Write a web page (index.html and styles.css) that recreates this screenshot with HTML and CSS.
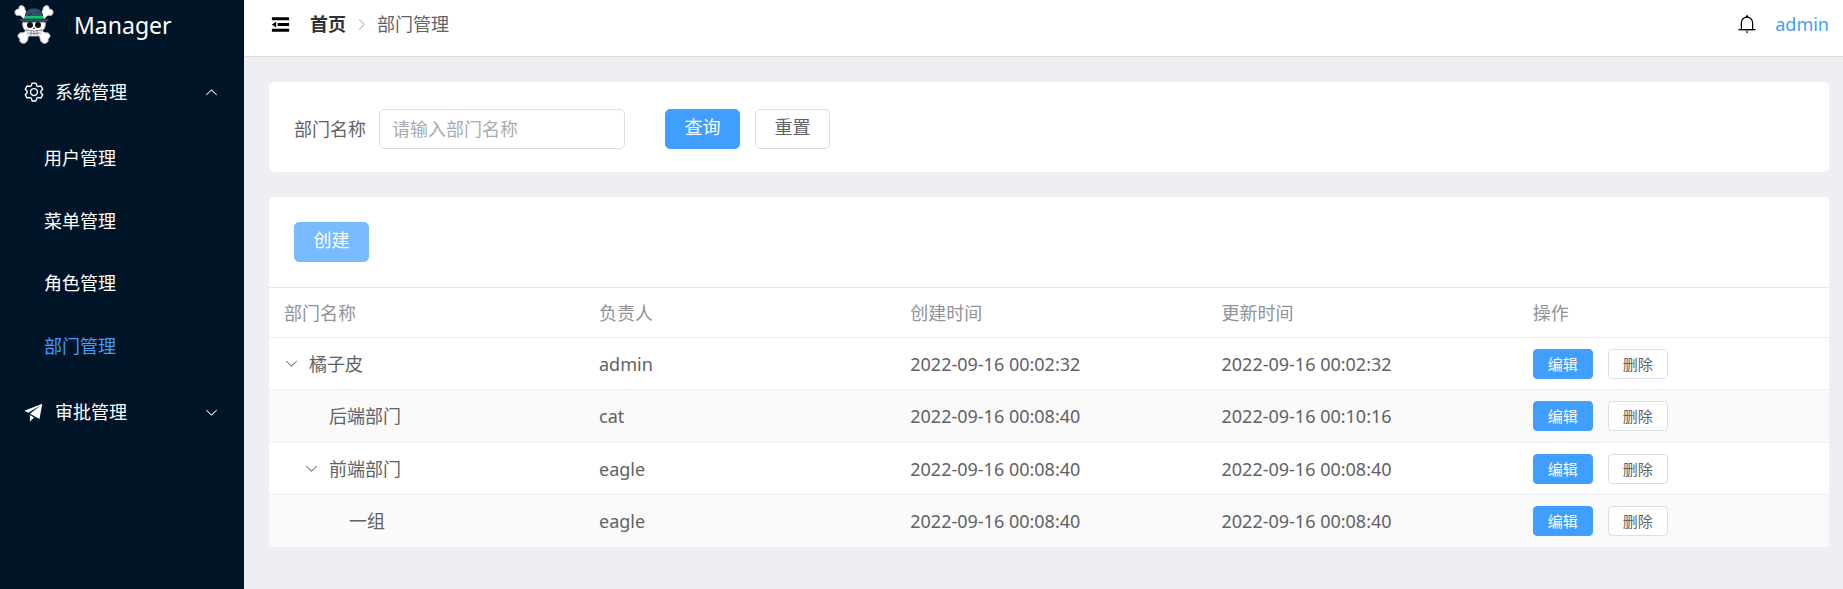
FILE: index.html
```html
<!DOCTYPE html>
<html lang="zh-CN">
<head>
<meta charset="utf-8">
<title>Manager</title>
<link rel="stylesheet" href="styles.css">
</head>
<body>
<svg class="sprite" aria-hidden="true">
  <symbol id="arrow-down" viewBox="0 0 1024 1024"><path d="M831.872 340.864 512 652.672 192.128 340.864a30.592 30.592 0 0 0-42.752 0 29.12 29.12 0 0 0 0 41.6L489.664 714.24a32 32 0 0 0 44.672 0l340.288-331.712a29.12 29.12 0 0 0 0-41.728 30.592 30.592 0 0 0-42.752 0z"/></symbol>
  <symbol id="arrow-right" viewBox="0 0 1024 1024"><path d="M340.864 149.312a30.592 30.592 0 0 0 0 42.752L652.736 512 340.864 831.872a30.592 30.592 0 0 0 0 42.752 29.12 29.12 0 0 0 41.728 0L714.24 534.336a32 32 0 0 0 0-44.672L382.592 149.376a29.12 29.12 0 0 0-41.728 0z"/></symbol>
</svg>
<div class="layout">
  <aside class="sidebar">
    <div class="brand">
      <svg class="brand-logo" viewBox="0 0 40 40" aria-hidden="true">
        <g stroke="#c9c6c8" stroke-width="1" fill="#fff">
          <path d="M6 1c3-1 5 1 5 4l4 5-4 5-5-5C3 11 1 10 1 7c0-2 2-3 4-3 0-1 0-3 1-3z"/>
          <path d="M34 1c-3-1-5 1-5 4l-4 5 4 5 5-5c3 1 5 0 5-3 0-2-2-3-4-3 0-1 0-3-1-3z"/>
          <path d="M13 25l-4 3c-3-1-5 1-5 3s2 2 2 3c-1 3 2 5 5 4 2-1 3-3 3-6l4-3z"/>
          <path d="M27 25l4 3c3-1 5 1 5 3s-2 2-2 3c1 3-2 5-5 4-2-1-3-3-3-6l-4-3z"/>
          <path d="M9 16h22c1 6-1 9-4 10v3q0 2-7 2t-7-2v-3c-3-1-5-4-4-10z"/>
        </g>
        <path d="M11 14c0-7 3-11 9-11s9 4 9 11z" fill="#315267" stroke="#101b28" stroke-width=".8"/>
        <path d="M16 8l2 1M23 7l2 1M14 10l2 0" stroke="#18293a"/>
        <path d="M11 11h18v3H11z" fill="#16c46b"/>
        <path d="M5 14h30v1l-3 2H8l-3-2z" fill="#315267" stroke="#101b28" stroke-width=".6"/>
        <circle cx="16" cy="20" r="3" fill="#111"/>
        <circle cx="24" cy="20" r="3" fill="#111"/>
        <path d="M19 24l1-2 1 2z" fill="#111"/>
        <path d="M12 25q8 2 16 0M14 28q6 1 12 0M17 26v4M20 26v4M23 26v4" fill="none" stroke="#55555c" stroke-width=".7"/>
      </svg>
      <span class="brand-name">Manager</span>
    </div>
    <nav class="menu">
      <button class="menu-title" type="button" aria-expanded="true">
        <svg class="menu-icon" viewBox="0 0 1024 1024" aria-hidden="true"><path d="M600.704 64a32 32 0 0 1 30.464 22.208l35.2 109.376c14.784 7.232 28.928 15.36 42.432 24.512l112.384-24.192a32 32 0 0 1 34.432 15.36L944.32 364.8a32 32 0 0 1-4.032 37.504l-77.12 85.12a357.12 357.12 0 0 1 0 49.024l77.12 85.248a32 32 0 0 1 4.032 37.504l-88.704 153.6a32 32 0 0 1-34.432 15.296L708.8 803.904c-13.44 9.088-27.648 17.28-42.368 24.512l-35.264 109.376A32 32 0 0 1 600.704 960H423.296a32 32 0 0 1-30.464-22.208L357.696 828.48a351.616 351.616 0 0 1-42.56-24.64l-112.32 24.256a32 32 0 0 1-34.432-15.36L79.68 659.2a32 32 0 0 1 4.032-37.504l77.12-85.248a357.12 357.12 0 0 1 0-48.896l-77.12-85.248A32 32 0 0 1 79.68 364.8l88.704-153.6a32 32 0 0 1 34.432-15.296l112.32 24.256c13.568-9.152 27.776-17.408 42.56-24.64l35.2-109.312A32 32 0 0 1 423.232 64H600.64zm-23.424 64H446.72l-36.352 113.088-24.512 11.968a294.113 294.113 0 0 0-34.816 20.096l-22.656 15.36-116.224-25.088-65.28 113.152 79.68 88.192-1.92 27.136a293.12 293.12 0 0 0 0 40.192l1.92 27.136-79.808 88.192 65.344 113.152 116.224-25.024 22.656 15.296a294.113 294.113 0 0 0 34.816 20.096l24.512 11.968L446.72 896h130.688l36.48-113.152 24.448-11.904a288.282 288.282 0 0 0 34.752-20.096l22.592-15.296 116.288 25.024 65.28-113.152-79.744-88.192 1.92-27.136a293.12 293.12 0 0 0 0-40.256l-1.92-27.136 79.808-88.128-65.344-113.152-116.288 24.96-22.592-15.232a287.616 287.616 0 0 0-34.752-20.096l-24.448-11.904L577.344 128zM512 320a192 192 0 1 1 0 384 192 192 0 0 1 0-384zm0 64a128 128 0 1 0 0 256 128 128 0 0 0 0-256z"/></svg>
        <span class="menu-label">系统管理</span>
        <svg class="menu-arrow open" aria-hidden="true"><use href="#arrow-down"/></svg>
      </button>
      <div class="submenu">
        <a class="menu-item" href="#user">用户管理</a>
        <a class="menu-item" href="#menu">菜单管理</a>
        <a class="menu-item" href="#role">角色管理</a>
        <a class="menu-item active" href="#dept" aria-current="page">部门管理</a>
      </div>
      <button class="menu-title" type="button" aria-expanded="false">
        <svg class="menu-icon" viewBox="0 0 1024 1024" aria-hidden="true"><path d="m64 448 832-320-128 704-446.08-243.328L832 192 242.816 545.472 64 448zm256 512V657.024L512 768 320 960z"/></svg>
        <span class="menu-label">审批管理</span>
        <svg class="menu-arrow" aria-hidden="true"><use href="#arrow-down"/></svg>
      </button>
    </nav>
  </aside>
  <div class="main">
    <header class="topbar">
      <button class="icon-button" type="button" aria-label="折叠菜单">
        <svg class="fold-icon" viewBox="0 0 1024 1024"><path d="M896 192H128v128h768V192zm0 256H384v128h512V448zm0 256H128v128h768V704zM320 384 128 512l192 128V384z"/></svg>
      </button>
      <nav class="breadcrumb">
        <a class="crumb-home" href="#home">首页</a>
        <svg class="crumb-sep" aria-hidden="true"><use href="#arrow-right"/></svg>
        <span>部门管理</span>
      </nav>
      <button class="icon-button" type="button" aria-label="通知">
        <svg class="bell-icon" viewBox="0 0 1024 1024"><path d="M512 64a64 64 0 0 1 64 64v64H448v-64a64 64 0 0 1 64-64z"/><path d="M256 768h512V448a256 256 0 1 0-512 0v320zm256-640a320 320 0 0 1 320 320v384H192V448a320 320 0 0 1 320-320z"/><path d="M96 768h832q32 0 32 32t-32 32H96q-32 0-32-32t32-32zm352 128h128a64 64 0 0 1-128 0z"/></svg>
      </button>
      <a class="user-link" href="#profile">admin</a>
    </header>
    <main class="content">
      <form class="card search">
        <label class="search-label" for="dept-name">部门名称</label>
        <input class="input" id="dept-name" type="text" placeholder="请输入部门名称">
        <button class="btn primary" type="button">查询</button>
        <button class="btn" type="reset">重置</button>
      </form>
      <section class="card table-card">
        <div class="toolbar">
          <button class="btn primary light" type="button">创建</button>
        </div>
        <table class="table">
          <thead>
            <tr><th class="col-name">部门名称</th><th>负责人</th><th>创建时间</th><th>更新时间</th><th>操作</th></tr>
          </thead>
          <tbody>
            <tr>
              <td><div class="tree"><svg class="tree-arrow"><use href="#arrow-down"/></svg>橘子皮</div></td>
              <td>admin</td><td>2022-09-16 00:02:32</td><td>2022-09-16 00:02:32</td>
              <td><div class="actions"><button class="btn small primary" type="button">编辑</button><button class="btn small" type="button">删除</button></div></td>
            </tr>
            <tr>
              <td><div class="tree level-1"><span class="tree-arrow"></span>后端部门</div></td>
              <td>cat</td><td>2022-09-16 00:08:40</td><td>2022-09-16 00:10:16</td>
              <td><div class="actions"><button class="btn small primary" type="button">编辑</button><button class="btn small" type="button">删除</button></div></td>
            </tr>
            <tr>
              <td><div class="tree level-1"><svg class="tree-arrow"><use href="#arrow-down"/></svg>前端部门</div></td>
              <td>eagle</td><td>2022-09-16 00:08:40</td><td>2022-09-16 00:08:40</td>
              <td><div class="actions"><button class="btn small primary" type="button">编辑</button><button class="btn small" type="button">删除</button></div></td>
            </tr>
            <tr>
              <td><div class="tree level-2"><span class="tree-arrow"></span>一组</div></td>
              <td>eagle</td><td>2022-09-16 00:08:40</td><td>2022-09-16 00:08:40</td>
              <td><div class="actions"><button class="btn small primary" type="button">编辑</button><button class="btn small" type="button">删除</button></div></td>
            </tr>
          </tbody>
        </table>
      </section>
    </main>
  </div>
</div>
</body>
</html>
```

FILE: styles.css
```css
* { box-sizing: border-box; }

body {
  margin: 0;
  background: #eeeff3;
  color: #606266;
  font: 18px/26px "Noto Sans", "Noto Sans CJK SC", sans-serif;
}

button, input { font: inherit; }
a { color: inherit; text-decoration: none; }
svg { fill: currentColor; flex: none; }

.sprite { display: none; }

.layout { display: flex; min-height: 100vh; }

/* Sidebar */
.sidebar {
  flex: none;
  width: 244px;
  background: #001428;
  color: #fff;
}

.brand {
  display: flex;
  align-items: center;
  gap: 20px;
  height: 57px;
  padding: 0 14px 7px;
}
.brand-logo { width: 40px; height: 40px; }
.brand-name { font-size: 23px; }

.menu-title {
  display: flex;
  align-items: center;
  width: 100%;
  height: 70px;
  padding: 0 25px 0 23px;
  border: 0;
  background: none;
  color: inherit;
  text-align: left;
}
.menu-icon { width: 22px; height: 22px; margin-right: 10px; }
.menu-label { flex: 1; }
.menu-arrow { width: 15px; height: 15px; }
.menu-arrow.open { transform: rotate(180deg); }

.menu-item {
  display: flex;
  align-items: center;
  height: 62px;
  padding-left: 44px;
}
.menu-item:nth-child(even) { height: 63px; }
.menu-item.active { color: #409eff; }

/* Main column */
.main { flex: 1; min-width: 0; }

.topbar {
  display: flex;
  align-items: center;
  height: 57px;
  padding: 0 14px 8px 25px;
  border-bottom: 1px solid #dcdcdc;
  background: #fff;
}
.icon-button {
  display: flex;
  padding: 0;
  border: 0;
  background: none;
  color: #000;
}
.fold-icon { width: 23px; height: 23px; }
.bell-icon { width: 20px; height: 20px; }

.breadcrumb {
  display: flex;
  flex: 1;
  align-items: center;
  gap: 8px;
  margin-left: 18px;
}
.crumb-home { color: #303133; font-weight: 700; }
.crumb-sep { width: 15px; height: 15px; color: #a8abb2; }

.user-link { margin-left: 18px; color: #409eff; }

.content {
  display: grid;
  gap: 25px;
  padding: 25px 14px 25px 25px;
}

.card {
  min-width: 0;
  border-radius: 5px;
  background: #fff;
}

.search {
  display: flex;
  align-items: center;
  padding: 27px 25px 23px;
}
.search-label { margin-right: 13px; }
.input {
  width: 246px;
  height: 40px;
  margin-right: 40px;
  padding: 0 12px;
  border: 1px solid #dcdfe6;
  border-radius: 5px;
  color: #606266;
}
.input::placeholder { color: #a8abb2; opacity: 1; }

.btn {
  min-width: 75px;
  height: 40px;
  padding: 0 18px 4px;
  border: 1px solid #dcdfe6;
  border-radius: 5px;
  background: #fff;
  color: #606266;
}
.btn + .btn { margin-left: 15px; }
.btn.primary {
  border-color: #409eff;
  background: #409eff;
  color: #fff;
}
.btn.primary.light { border-color: #79bbff; background: #79bbff; }
.btn.small {
  min-width: 60px;
  height: 30px;
  padding: 0 14px;
  border-radius: 4px;
  font-size: 15px;
  line-height: 20px;
}

/* Table */
.table-card { border-radius: 5px 5px 0 0; }
.toolbar { padding: 25px; }

.table {
  width: 100%;
  border-top: 1px solid #e4e6ea;
  border-spacing: 0;
  table-layout: fixed;
}
.col-name { width: 315px; }
.table th, .table td {
  height: 52px;
  padding: 0 15px;
  border-bottom: 1px solid #ebeef5;
  text-align: left;
}
.table th { height: 50px; color: #909399; font-weight: 400; }
.table tbody tr:nth-child(even) td { height: 53px; background: #fafafa; }

.tree { display: flex; align-items: center; }
.tree.level-1 { padding-left: 20px; }
.tree.level-2 { padding-left: 40px; }
.tree-arrow { flex: none; width: 15px; height: 15px; margin-right: 10px; }

.actions { display: flex; }
```
